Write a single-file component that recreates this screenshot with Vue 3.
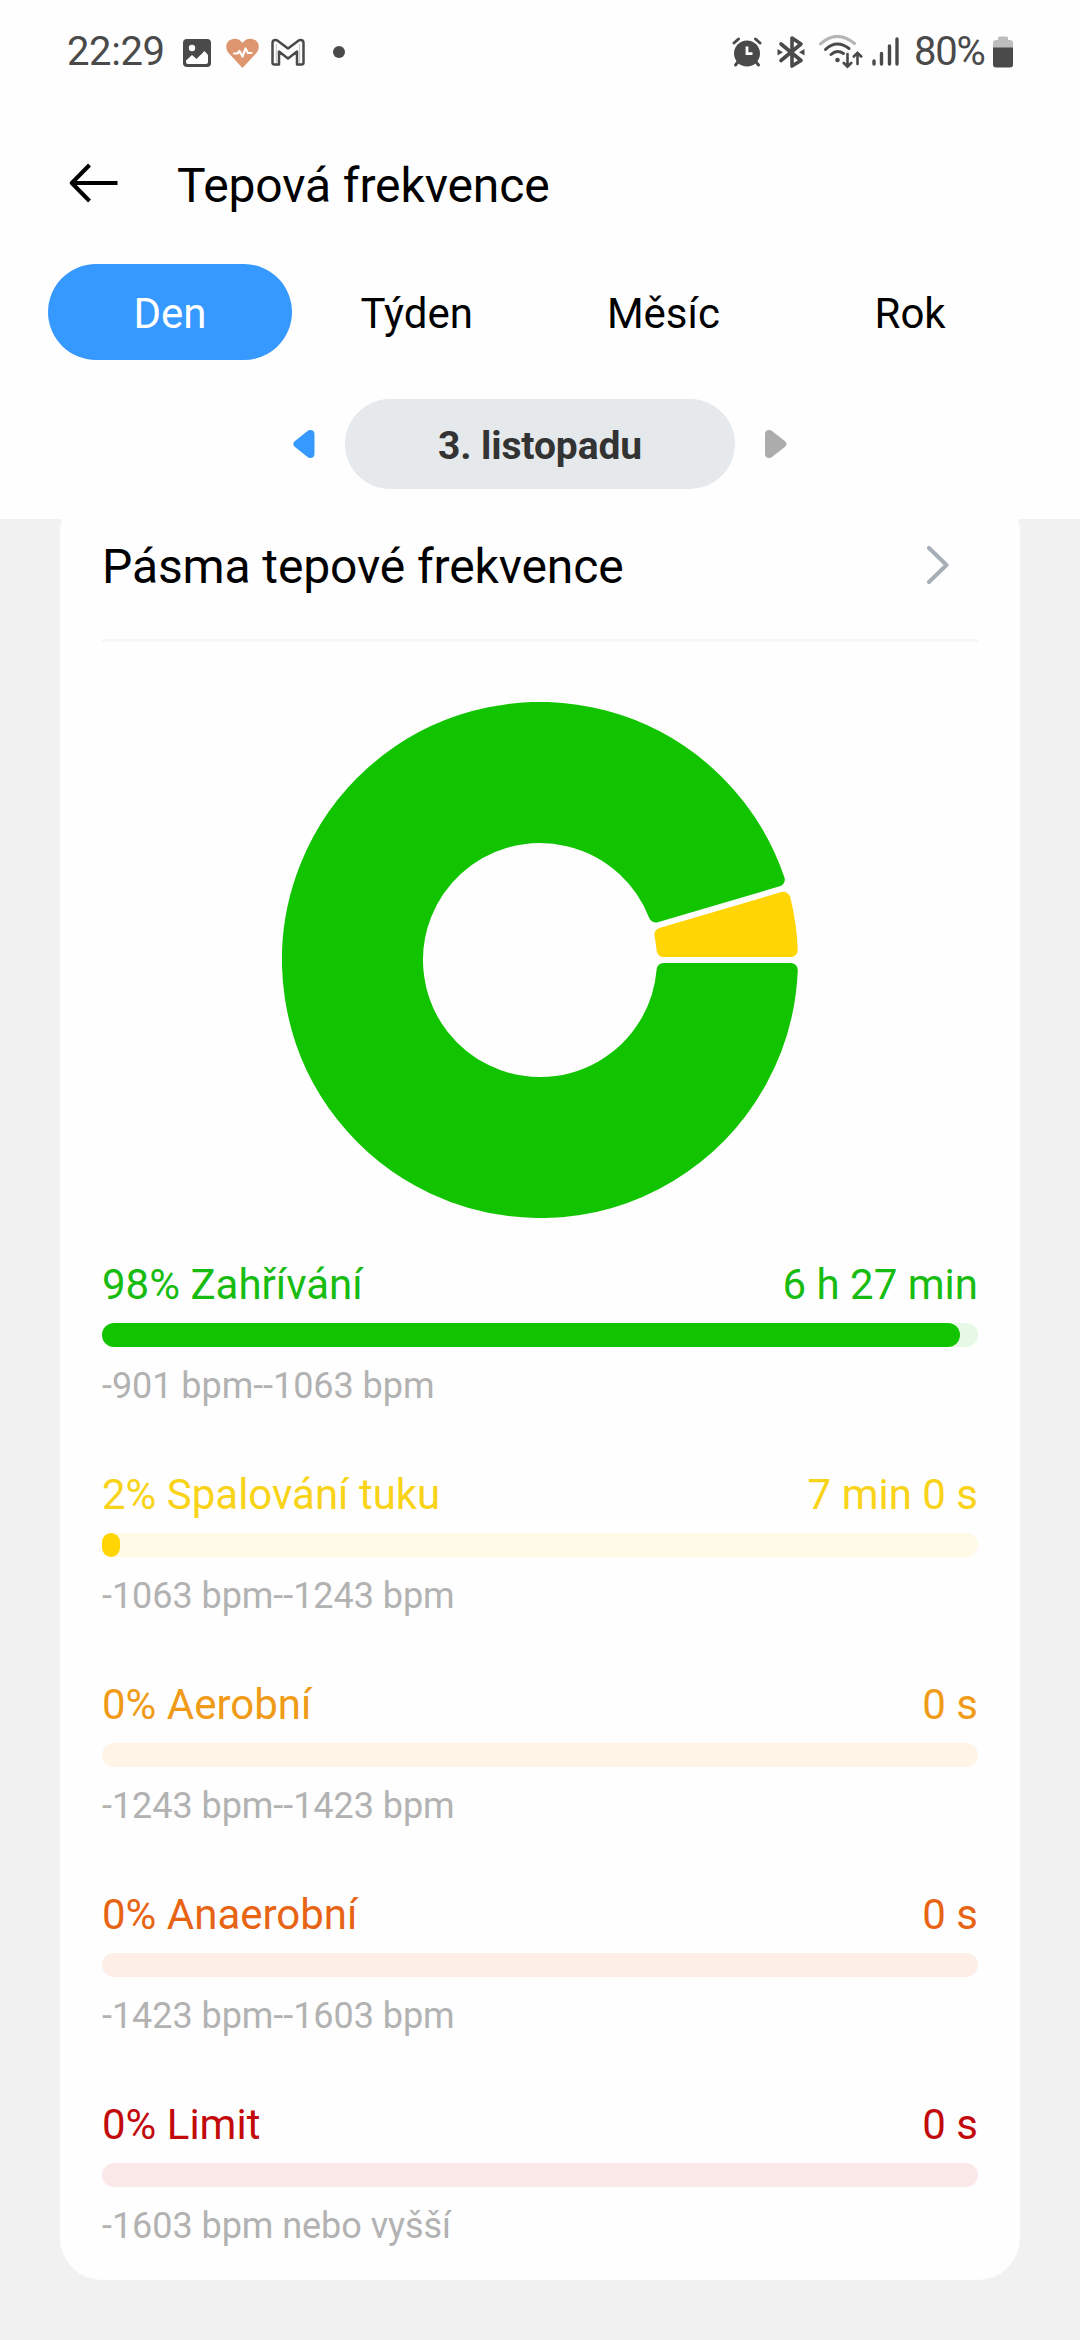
<script setup>
const tabs = ['Den', 'Týden', 'Měsíc', 'Rok']
const activeTab = 'Den'

const zones = [
  { name: 'Zahřívání', percent: 98, time: '6 h 27 min', range: '-901 bpm--1063 bpm', kind: 'warm' },
  { name: 'Spalování tuku', percent: 2, time: '7 min 0 s', range: '-1063 bpm--1243 bpm', kind: 'fat' },
  { name: 'Aerobní', percent: 0, time: '0 s', range: '-1243 bpm--1423 bpm', kind: 'aerobic' },
  { name: 'Anaerobní', percent: 0, time: '0 s', range: '-1423 bpm--1603 bpm', kind: 'anaerobic' },
  { name: 'Limit', percent: 0, time: '0 s', range: '-1603 bpm nebo vyšší', kind: 'limit' },
]

// Donut geometry: each slice is inset by the corner radius and the
// round-joined stroke grows it back to full size with soft corners.
const OUTER = 258
const INNER = 117
const CORNER = 7
const HALF_GAP = 3

function slice(startDeg, endDeg) {
  const rad = Math.PI / 180
  const ro = OUTER - CORNER
  const ri = INNER + CORNER
  const inset = HALF_GAP + CORNER
  const at = (r, deg, sign) => {
    const a = deg * rad + sign * Math.asin(inset / r)
    return `${(r * Math.cos(a)).toFixed(2)} ${(r * Math.sin(a)).toFixed(2)}`
  }
  const large = endDeg - startDeg > 180 ? 1 : 0
  return `M${at(ro, startDeg, 1)}A${ro} ${ro} 0 ${large} 1 ${at(ro, endDeg, -1)}` +
    `L${at(ri, endDeg, -1)}A${ri} ${ri} 0 ${large} 0 ${at(ri, startDeg, 1)}Z`
}

const slices = [
  { kind: 'warm', d: slice(0, 343.6) },
  { kind: 'fat', d: slice(343.6, 360) },
]
</script>

<template>
  <div class="screen">
    <div class="status">
      <span class="clock">22:29</span>
      <svg class="i-photo" width="28" height="34" viewBox="0 0 28 34">
        <rect y="4" width="28" height="28" rx="4" fill="#4a4a4a" />
        <circle cx="9" cy="13" r="3.2" fill="#fff" />
        <path d="M3 25.500L9 20L13.500 24L21.500 16L25 20V27Q25 29 23 29H5Q3 29 3 27Z" fill="#fff" />
      </svg>
      <svg class="i-heart" width="33" height="34" viewBox="0 0 33 34">
        <path d="M16.500 33L3 18.500C-1 14 -.5 8 3.500 5.300C8 2.500 13.500 3.500 16.500 8C19.500 3.500 25 2.500 29.500 5.300C33.500 8 34 14 30 18.500Z" fill="#dd9670" />
        <path d="M8 18.500H11.500L13.500 16L16.500 21.500L19.500 13.500L22 18H25.500" fill="none" stroke="#fff" stroke-width="2.200" stroke-linecap="round" stroke-linejoin="round" />
      </svg>
      <svg class="i-mail" width="34" height="34" viewBox="0 0 34 34">
        <path d="M5.300 9V28M28.700 9V28" fill="none" stroke="#c4c4c4" stroke-width="1" />
        <path d="M1.500 27.500V8Q1.500 5 4.500 5Q5.700 5 7 6L17 13.500L27 6Q28.300 5 29.500 5Q32.500 5 32.500 8V27.500Q32.500 29.500 30.500 29.500H26V16.500L17 23.500L8 16.500V29.500H3.500Q1.500 29.500 1.500 27.500Z" fill="none" stroke="#4a4a4a" stroke-width="2.500" stroke-linejoin="round" />
      </svg>
      <span class="dot"></span>

      <svg class="i-alarm" width="30" height="34" viewBox="0 0 30 34">
        <g stroke="#4a4a4a" stroke-linecap="round" fill="none">
          <path d="M2 8L6.500 4M28 8L23.500 4" stroke-width="3" />
          <path d="M6 27L3.500 30M24 27L26.500 30" stroke-width="3" />
        </g>
        <circle cx="15" cy="18.500" r="13" fill="#4a4a4a" />
        <path d="M15 11.500V18.700H20.500" fill="none" stroke="#fff" stroke-width="2.800" />
      </svg>
      <svg class="i-bt" width="28" height="34" viewBox="0 0 28 34">
        <path d="M4 9L24 25.500L15 31V3L24 9L4 25.500" fill="none" stroke="#4a4a4a" stroke-width="3.600" stroke-linejoin="round" stroke-linecap="round" />
        <path d="M.5 14L6 17.300L.5 20.500ZM27.500 14L22 17.300L27.500 20.500Z" fill="#4a4a4a" />
      </svg>
      <svg class="i-wifi" width="44" height="34" viewBox="0 0 44 34">
        <g fill="none" stroke-linecap="round" stroke-width="3">
          <path d="M1.500 9Q17.500 -6 35.500 8.500" stroke="#b5b5b5" />
          <path d="M6.500 14.500Q17.500 4 30 13.500" stroke="#4a4a4a" />
          <path d="M12 19.500Q18 14 24.500 18.500" stroke="#4a4a4a" />
          <path d="M28.500 19V31M24.800 28L28.500 31.700L32.200 28M38.500 29V18.500M34.800 21.500L38.500 17.800L42.200 21.500" stroke="#4a4a4a" stroke-width="2.600" />
        </g>
        <circle cx="18.500" cy="25" r="2.300" fill="#4a4a4a" />
      </svg>
      <svg class="i-signal" width="27" height="34" viewBox="0 0 27 34">
        <path d="M2 26V29M9.500 18.500V29M17.500 11V29M25 4V29" stroke="#4a4a4a" stroke-width="3.400" stroke-linecap="round" />
      </svg>
      <span class="battery-text">80%</span>
      <svg class="i-battery" width="20" height="34" viewBox="0 0 20 34">
        <path d="M5 5V3Q5 1.500 6.500 1.500H13.500Q15 1.500 15 3V5H17Q20 5 20 8V14H0V8Q0 5 3 5Z" fill="#bdbdbd" />
        <path d="M0 12.500H20V29.500Q20 32.500 17 32.500H3Q0 32.500 0 29.500Z" fill="#4a4a4a" />
      </svg>
    </div>

    <header class="header">
      <svg class="back" width="50" height="40" viewBox="0 0 50 40">
        <path d="M48.500 20H3M20.500 2L2.800 20L20.500 38" fill="none" stroke="#000" stroke-width="4" stroke-linejoin="round" />
      </svg>
      <h1>Tepová frekvence</h1>
    </header>

    <nav class="tabs">
      <div v-for="t in tabs" :key="t" class="tab" :class="{ active: t === activeTab }">{{ t }}</div>
    </nav>

    <div class="date-row">
      <svg width="22" height="28" viewBox="0 0 22 28">
        <path d="M21.500 4V24Q21.500 28 17 28Q15.800 28 14.500 27L2 17Q-1.500 14 2 11L14.500 1Q15.800 0 17 0Q21.500 0 21.500 4Z" fill="#3699ff" />
      </svg>
      <div class="date">3. listopadu</div>
      <svg width="22" height="28" viewBox="0 0 22 28">
        <path d="M0 4V24Q0 28 4.500 28Q5.700 28 7 27L19.800 17Q23.300 14 19.800 11L7 1Q5.700 0 4.500 0Q0 0 0 4Z" fill="#acacac" />
      </svg>
    </div>

    <main class="content">
      <section class="card">
        <div class="card-head">
          <h2>Pásma tepové frekvence</h2>
          <svg class="chevron" width="22" height="38" viewBox="0 0 22 38">
            <path d="M2 2L19.500 19L2 36" fill="none" stroke="#a6aeb8" stroke-width="4" stroke-linecap="round" stroke-linejoin="round" />
          </svg>
        </div>

        <svg class="donut" width="516" height="516" viewBox="-258 -258 516 516">
          <path v-for="s in slices" :key="s.kind" :d="s.d" :class="s.kind" />
        </svg>

        <div class="zones">
          <div v-for="z in zones" :key="z.kind" class="zone" :class="z.kind">
            <div class="zone-label">
              <span>{{ z.percent }}% {{ z.name }}</span>
              <span>{{ z.time }}</span>
            </div>
            <div class="track">
              <div class="fill" :style="{ width: z.percent + '%' }"></div>
            </div>
            <div class="range">{{ z.range }}</div>
          </div>
        </div>
      </section>
    </main>
  </div>
</template>

<style>
body {
  margin: 0;
  background: #fff;
}
</style>

<style scoped>
.screen {
  width: 1080px;
  height: 2340px;
  display: flex;
  flex-direction: column;
  overflow: hidden;
  background: #fefefe;
  color: #000;
  font-family: Roboto, "Liberation Sans", sans-serif;
}
svg {
  display: block;
  flex: none;
}
.status {
  height: 104px;
  flex: none;
  display: flex;
  align-items: center;
  padding: 0 67px;
  box-sizing: border-box;
  color: #4a4a4a;
  font-size: 40px;
  line-height: 60px;
  white-space: nowrap;
}
.clock {
  width: 116px;
  letter-spacing: -0.4px;
}
.i-heart { margin-left: 15px; }
.i-mail { margin-left: 12px; }
.dot {
  width: 12px;
  height: 12px;
  margin-left: 28px;
  border-radius: 50%;
  background: #4a4a4a;
}
.i-alarm { margin-left: auto; }
.i-bt { margin-left: 15px; }
.i-wifi { margin-left: 14px; }
.i-signal { margin-left: 9px; }
.battery-text {
  width: 79px;
  margin-left: 15px;
  letter-spacing: -1.2px;
}
.header {
  height: 160px;
  flex: none;
  display: flex;
  align-items: center;
  padding-left: 69px;
}
.back { margin-bottom: 2px; }
h1,
h2 {
  margin: 0;
  font-size: 48px;
  line-height: 60px;
  font-weight: 400;
  letter-spacing: -0.12px;
  white-space: nowrap;
}
h1 { margin: 3px 0 0 58px; }
.tabs {
  height: 96px;
  flex: none;
  display: grid;
  grid-template-columns: repeat(4, 244px);
  column-gap: 2.700px;
  padding-left: 48px;
}
.tab {
  padding-top: 4px;
  text-align: center;
  font-size: 42px;
  line-height: 92px;
}
.tab.active {
  border-radius: 48px;
  background: #3699ff;
  color: #fff;
}
.date-row {
  height: 90px;
  flex: none;
  margin: 39px 0 30px;
  display: flex;
  align-items: center;
  justify-content: center;
  gap: 30px;
}
.date {
  width: 390px;
  height: 90px;
  padding-top: 4px;
  box-sizing: border-box;
  border-radius: 45px;
  background: #e5e9ec;
  color: #333;
  font-size: 39px;
  font-weight: 700;
  letter-spacing: -0.12px;
  line-height: 86px;
  text-align: center;
}
.content {
  flex: 1;
  overflow: hidden;
  background: #f1f1f1;
}
.card {
  height: 1790px;
  margin: -29px 60px 0;
  padding: 0 42px;
  box-sizing: border-box;
  border-radius: 42px;
  background: #fefefe;
}
.card-head {
  height: 152px;
  padding: 4px 29px 0 0;
  box-sizing: border-box;
  border-bottom: 3px solid #f5f6f6;
  display: flex;
  align-items: center;
  justify-content: space-between;
}
.chevron { margin-bottom: 3px; }
.donut { margin: 60px auto 42px; }
.donut path {
  fill: var(--tone);
  stroke: var(--tone);
  stroke-width: 14px;
  stroke-linejoin: round;
}
.zones {
  display: flex;
  flex-direction: column;
  gap: 63px;
}
.zone-label {
  display: flex;
  justify-content: space-between;
  color: var(--text);
  font-size: 42px;
  line-height: 50px;
}
.track {
  height: 24px;
  margin: 13px 0 18px;
  border-radius: 12px;
  background: var(--soft);
}
.fill {
  height: 24px;
  border-radius: 12px;
  background: var(--tone);
}
.range {
  color: #b2b2b2;
  font-size: 36px;
  letter-spacing: -0.05px;
  line-height: 42px;
}
.warm { --tone: #12c400; --text: #18bc10; --soft: #e7f9e6; }
.fat { --tone: #ffd504; --text: #f8d318; --soft: #fff9e6; }
.aerobic { --tone: #f39c12; --text: #f09b17; --soft: #fff4e6; }
.anaerobic { --tone: #e9630f; --text: #e76414; --soft: #fdefe7; }
.limit { --tone: #c30a0a; --text: #c20a0c; --soft: #fae7e7; }
</style>
